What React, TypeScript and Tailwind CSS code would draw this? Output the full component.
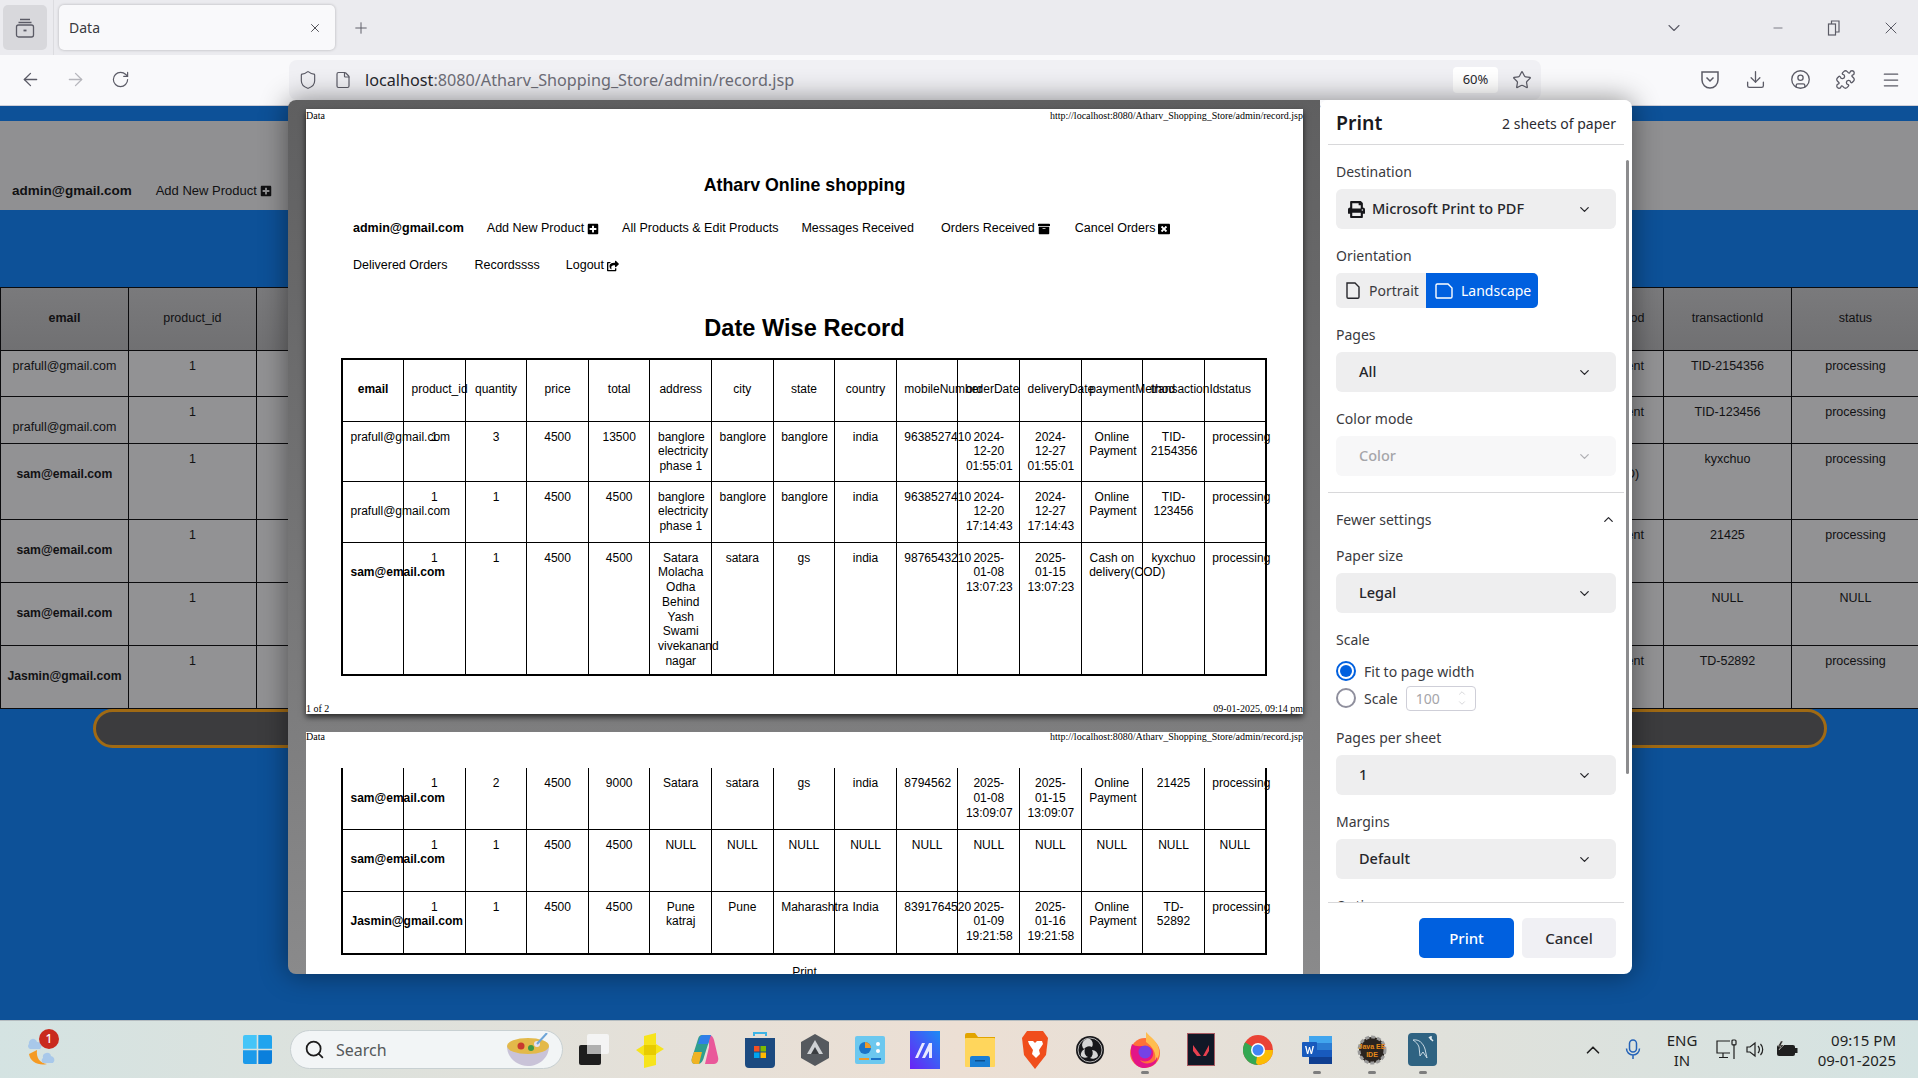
import { ReactNode } from "react";
import { ArrowLeft, ArrowRight, ChevronDown, ChevronUp, CircleUser, Download, File, Menu, Minus, Plus, Puzzle, RotateCw, Search, Shield, Star, X } from "lucide-react";
import { FaArchive, FaPlusSquare, FaPrint, FaShareSquare, FaWindowClose } from "react-icons/fa";

const columns = ["email", "product_id", "quantity", "price", "total", "address", "city", "state", "country", "mobileNumber", "orderDate", "deliveryDate", "paymentMethod", "transactionId", "status"];

type Row = { cells: string[]; bold?: boolean; drop?: boolean };

const rows: Row[] = [
  { cells: ["prafull@gmail.com", "1", "3", "4500", "13500", "banglore electricity phase 1", "banglore", "banglore", "india", "9638527410", "2024-\n12-20\n01:55:01", "2024-\n12-27\n01:55:01", "Online Payment", "TID-\n2154356", "processing"] },
  { drop: true, cells: ["prafull@gmail.com", "1", "1", "4500", "4500", "banglore electricity phase 1", "banglore", "banglore", "india", "9638527410", "2024-\n12-20\n17:14:43", "2024-\n12-27\n17:14:43", "Online Payment", "TID-\n123456", "processing"] },
  { bold: true, drop: true, cells: ["sam@email.com", "1", "1", "4500", "4500", "Satara Molacha Odha Behind Yash Swami vivekanand nagar", "satara", "gs", "india", "9876543210", "2025-\n01-08\n13:07:23", "2025-\n01-15\n13:07:23", "Cash on\ndelivery(COD)", "kyxchuo", "processing"] },
  { bold: true, drop: true, cells: ["sam@email.com", "1", "2", "4500", "9000", "Satara", "satara", "gs", "india", "8794562", "2025-\n01-08\n13:09:07", "2025-\n01-15\n13:09:07", "Online Payment", "21425", "processing"] },
  { bold: true, drop: true, cells: ["sam@email.com", "1", "1", "4500", "4500", "NULL", "NULL", "NULL", "NULL", "NULL", "NULL", "NULL", "NULL", "NULL", "NULL"] },
  { bold: true, drop: true, cells: ["Jasmin@gmail.com", "1", "1", "4500", "4500", "Pune katraj", "Pune", "Maharashtra", "India", "8391764520", "2025-\n01-09\n19:21:58", "2025-\n01-16\n19:21:58", "Online Payment", "TD-\n52892", "processing"] },
];

const pageRowHeights = ["h-[46px]", "h-[47px]", "h-[76px]", "h-[63px]", "h-[63px]", "h-[63px]"];
const sheetRowHeights = ["h-[60px]", "h-[61px]", "h-[133px]", "h-[61px]", "h-[62px]", "h-[63px]"];

function CellText({ row, i, flat, boldCls }: { row: Row; i: number; flat?: boolean; boldCls?: string }) {
  const value = flat ? row.cells[i].replace(/-\n/g, "-").replace(/\n/g, " ") : row.cells[i];
  if (i > 0) return <>{value}</>;
  return (
    <span className={row.bold ? `font-bold ${boldCls ?? ""}` : ""}>
      {row.drop && <br />}
      {value}
    </span>
  );
}

function PageTable() {
  return (
    <table className="w-[1920px] shrink-0 table-fixed border-collapse text-[12.5px] leading-[15px] text-[#111113]">
      <thead>
        <tr className="h-[63px] bg-gradient-to-b from-[#7a7a7c] to-[#707072]">
          {columns.map((c, i) => (
            <th key={c} className={`border border-[#0b0b0d] pb-px align-middle ${i === 0 ? "font-bold" : "font-normal"}`}>{c}</th>
          ))}
        </tr>
      </thead>
      <tbody>
        {rows.map((row, r) => (
          <tr key={r} className={`${pageRowHeights[r]} bg-[#929294]`}>
            {row.cells.map((_, i) => (
              <td key={i} className="border border-[#0b0b0d] px-1.5 pt-[8px] text-center align-top">
                <CellText row={row} i={i} flat boldCls="text-[12.2px]" />
              </td>
            ))}
          </tr>
        ))}
      </tbody>
    </table>
  );
}

function SheetTable({ from, to, head }: { from: number; to: number; head?: boolean }) {
  return (
    <table className={`w-[926px] table-fixed border-collapse border-2 border-black text-[12px] leading-[14.75px] text-black ${head ? "" : "border-t-0"}`}>
      {head && (
        <thead>
          <tr className="h-[62px]">
            {columns.map((c, i) => (
              <th key={c} className={`border border-black px-[7.5px] pb-px align-middle ${i === 0 ? "font-bold" : "font-normal"}`}>{c}</th>
            ))}
          </tr>
        </thead>
      )}
      <tbody>
        {rows.slice(from, to).map((row, r) => (
          <tr key={r} className={sheetRowHeights[from + r]}>
            {row.cells.map((_, i) => (
              <td key={i} className={`border border-black px-[7.5px] pt-[8px] text-center align-top whitespace-pre-line ${!head && r === 0 ? "border-t-0" : ""}`}>
                <CellText row={row} i={i} />
              </td>
            ))}
          </tr>
        ))}
      </tbody>
    </table>
  );
}

function SheetHeader() {
  return (
    <div className="flex h-[12px] items-end justify-between font-['Liberation_Serif',serif] text-[10px] leading-[10px] text-black">
      <span>Data</span>
      <span>http://localhost:8080/Atharv_Shopping_Store/admin/record.jsp</span>
    </div>
  );
}

function Select({ children, disabled }: { children: ReactNode; disabled?: boolean }) {
  return (
    <div className={`flex h-10 w-[280px] items-center justify-between rounded-[6px] pl-[23px] pr-[24px] text-[14.5px] font-medium ${disabled ? "bg-[#f7f7f8] text-[#a5a5a9]" : "bg-[#eeeeef] text-[#26262b]"}`}>
      {children}
      <ChevronDown size={15} strokeWidth={2} className={disabled ? "text-[#b0b0b4]" : "text-[#26262b]"} />
    </div>
  );
}

function Label({ children, className = "" }: { children: ReactNode; className?: string }) {
  return <div className={`h-5 text-[14px] leading-5 text-[#3a3a40] ${className}`}>{children}</div>;
}

function PrintPanel() {
  return (
    <div className="flex w-[312px] shrink-0 flex-col rounded-r-[8px] rounded-tl-[8px] bg-white font-['Noto_Sans',sans-serif]">
      <div className="mx-2 flex h-[45px] shrink-0 items-center justify-between border-b border-[#d8d8da] px-2 pt-[2px]">
        <span className="text-[19.5px] font-semibold text-[#1a1a1f]">Print</span>
        <span className="text-[14px] text-[#2a2a30]">2 sheets of paper</span>
      </div>
      <div className="relative h-[757px] overflow-hidden px-4 pt-[17px]">
        <div className="absolute right-[3px] top-[15px] h-[614px] w-[3px] rounded-full bg-[#8c8c8e]" />
        <Label>Destination</Label>
        <div className="mt-[7px]">
          <div className="flex h-10 w-[280px] items-center justify-between rounded-[6px] bg-[#eeeeef] pl-3 pr-[24px] text-[14.5px] font-medium text-[#26262b]">
            <span className="flex items-center gap-[7px]"><FaPrint size={17} className="text-[#17171b]" />Microsoft Print to PDF</span>
            <ChevronDown size={15} strokeWidth={2} />
          </div>
        </div>
        <Label className="mt-[17px]">Orientation</Label>
        <div className="mt-[7px] flex h-[35px] w-[202px] text-[14px]">
          <div className="flex w-[90px] items-center gap-[8px] rounded-l-[5px] bg-[#eeeeef] pl-[9px] text-[#3a3a40]">
            <svg width="16" height="17" viewBox="0 0 16 17" fill="none" stroke="#26262b" strokeWidth="1.4"><path d="M2 1h8l4 4v10a1.200 1.200 0 0 1-1.200 1.200H3.200A1.200 1.200 0 0 1 2 15Z" /></svg>
            Portrait
          </div>
          <div className="flex w-[112px] items-center gap-[8px] rounded-r-[5px] bg-[#0060df] pl-[9px] text-white">
            <svg width="18" height="16" viewBox="0 0 18 16" fill="none" stroke="#fff" strokeWidth="1.4"><path d="M1 2.200A1.200 1.200 0 0 1 2.200 1H13l4 4v8.800a1.200 1.200 0 0 1-1.200 1.200H2.200A1.200 1.200 0 0 1 1 13.800Z" /></svg>
            Landscape
          </div>
        </div>
        <Label className="mt-[17px]">Pages</Label>
        <div className="mt-[7px]"><Select>All</Select></div>
        <Label className="mt-[17px]">Color mode</Label>
        <div className="mt-[7px]"><Select disabled>Color</Select></div>
        <div className="-mx-2 mt-[16px] border-t border-[#d8d8da]" />
        <div className="mt-[16px] flex h-5 items-center justify-between pr-0 text-[14px] text-[#3a3a40]">
          Fewer settings
          <ChevronUp size={15} strokeWidth={2} className="text-[#26262b]" />
        </div>
        <Label className="mt-[17px]">Paper size</Label>
        <div className="mt-[7px]"><Select>Legal</Select></div>
        <Label className="mt-[17px]">Scale</Label>
        <div className="mt-[11px] flex h-[20px] items-center gap-[8px] text-[14px] text-[#3a3a40]">
          <span className="flex size-5 items-center justify-center rounded-full border-2 border-[#0060df]"><span className="size-[12px] rounded-full bg-[#0060df]" /></span>
          Fit to page width
        </div>
        <div className="mt-[4px] flex h-[26px] items-center gap-[8px] text-[14px] text-[#3a3a40]">
          <span className="size-5 rounded-full border-2 border-[#8f8f9d]" />
          Scale
          <span className="flex h-[25px] w-[70px] items-center justify-between rounded-[4px] border border-[#cfcfd8] pl-[9px] pr-[8px] text-[#a5a5a9]">
            100
            <span className="flex flex-col text-[#cfcfd3]"><ChevronUp size={10} /><ChevronDown size={10} /></span>
          </span>
        </div>
        <Label className="mt-[17px]">Pages per sheet</Label>
        <div className="mt-[7px]"><Select>1</Select></div>
        <Label className="mt-[17px]">Margins</Label>
        <div className="mt-[7px]"><Select>Default</Select></div>
        <Label className="mt-[17px]">Options</Label>
      </div>
      <div className="mx-2 flex flex-1 items-start justify-end gap-2 border-t border-[#d8d8da] pr-2 pt-[15px] text-[15px] font-medium">
        <div className="flex h-10 w-[95px] items-center justify-center rounded-[5px] bg-[#0060df] text-white">Print</div>
        <div className="flex h-10 w-[94px] items-center justify-center rounded-[5px] bg-[#f0f0f4] text-[#2a2a30]">Cancel</div>
      </div>
    </div>
  );
}

function PrintPreview() {
  const link = "inline-flex items-center gap-[3px]";
  return (
    <div className="flex w-[1032px] shrink-0 flex-col items-start gap-[18px] overflow-hidden rounded-l-[8px] bg-gradient-to-b from-[#5f5f60] to-[#8a8a8b] pl-[18px] pt-[9px] font-['Liberation_Sans',sans-serif]">
      <div className="flex h-[605px] w-[997px] shrink-0 flex-col bg-white shadow-[0_3px_6px_rgba(0,0,0,0.7)]">
        <SheetHeader />
        <div className="mt-[54px] text-center text-[17.8px] font-bold leading-[20px] text-black">Atharv Online shopping</div>
        <div className="ml-[47px] mt-[26px] flex w-[880px] flex-wrap gap-x-[23px] gap-y-[22px] text-[12.5px] leading-[15px] text-black">
          <span className="font-bold">admin@gmail.com</span>
          <span className={link}>Add New Product<FaPlusSquare size={12} /></span>
          <span>All Products &amp; Edit Products</span>
          <span>Messages Received</span>
          <span className={`${link} ml-[4px]`}>Orders Received<FaArchive size={12} /></span>
          <span className={`${link} ml-[2px]`}>Cancel Orders<FaWindowClose size={12} /></span>
          <span>Delivered Orders</span>
          <span className="ml-[4px]">Recordssss</span>
          <span className={`${link} ml-[3px]`}>Logout<FaShareSquare size={12} /></span>
        </div>
        <div className="mt-[41px] text-center text-[23.6px] font-bold leading-[28px] text-black">Date Wise Record</div>
        <div className="ml-[35px] mt-[16px]"><SheetTable from={0} to={3} head /></div>
        <div className="mt-auto flex h-[11px] items-center justify-between font-['Liberation_Serif',serif] text-[10px] text-black">
          <span>1 of 2</span>
          <span>09-01-2025, 09:14 pm</span>
        </div>
      </div>
      <div className="flex h-[242px] w-[997px] shrink-0 flex-col overflow-hidden bg-white">
        <SheetHeader />
        <div className="ml-[35px] mt-[26px]"><SheetTable from={3} to={6} /></div>
        <div className="mt-[10px] text-center text-[12px] leading-[14px] text-black">Print</div>
      </div>
    </div>
  );
}

function TabBar() {
  return (
    <div className="flex h-[55px] shrink-0 items-center bg-[#ebebef] pl-[3px] text-[#5b5b66]">
      <div className="flex h-[45px] w-[44px] items-center justify-center rounded-[5px] bg-[#d8d8dc]">
        <svg width="20" height="20" viewBox="0 0 20 20" fill="none" stroke="#5b5b66" strokeWidth="1.300"><path d="M5 1.500h10M3.500 4.500h13" /><rect x="1.500" y="7" width="17" height="12" rx="2" /><path d="M8.500 12.500h3" strokeWidth="1.800" /></svg>
      </div>
      <div className="ml-[6px] h-[55px] w-px bg-[#dcdce0]" />
      <div className="ml-[5px] flex h-[45px] w-[276px] items-center justify-between rounded-[5px] bg-[#f9f9fb] pl-[10px] pr-[13px] font-['Noto_Sans',sans-serif] text-[14px] text-[#3a3a40] shadow-[0_0_3px_rgba(0,0,0,0.25)]">
        Data
        <X size={14} strokeWidth={1.5} />
      </div>
      <Plus size={18} strokeWidth={1.3} className="ml-[17px]" />
      <ChevronDown size={20} strokeWidth={1.3} className="ml-[1294px]" />
      <Minus size={14} strokeWidth={1.3} className="ml-[87px]" />
      <svg width="14" height="16" viewBox="0 0 14 16" fill="none" stroke="#5b5b66" strokeWidth="1.200" className="ml-[42px]"><rect x="1.500" y="4" width="7" height="11" /><path d="M4.500 4V1h7.500v11H8.500" /></svg>
      <X size={20} strokeWidth={1.2} className="ml-[40px]" />
    </div>
  );
}

function Toolbar() {
  return (
    <div className="flex h-[51px] shrink-0 items-center border-b border-[#cfcfd8] bg-[#f9f9fb] pb-[1px] text-[#5b5b66]">
      <ArrowLeft size={21} strokeWidth={1.5} className="ml-[20px]" />
      <ArrowRight size={21} strokeWidth={1.5} className="ml-[24px] text-[#b6b6bc]" />
      <RotateCw size={19} strokeWidth={1.5} className="ml-[25px]" />
      <div className="ml-[159px] mt-[5px] flex h-10 w-[1252px] items-center self-start rounded-[8px] bg-[#f0f0f4] pl-[9px] pr-[9px]">
        <Shield size={20} strokeWidth={1.4} />
        <File size={18} strokeWidth={1.6} className="ml-[16px]" />
        <span className="ml-[13px] font-['Noto_Sans',sans-serif] text-[16.2px] text-[#6e6e78]"><span className="text-[#27272c]">localhost</span>:8080/Atharv_Shopping_Store/admin/record.jsp</span>
        <span className="ml-auto flex h-[26px] w-[45px] items-center justify-center rounded-[4px] bg-white font-['Noto_Sans',sans-serif] text-[13px] text-[#27272c]">60%</span>
        <Star size={20} strokeWidth={1.5} className="ml-[14px]" />
      </div>
      <svg width="22" height="22" viewBox="0 0 22 22" fill="none" stroke="#5b5b66" strokeWidth="1.500" className="ml-[158px]"><path d="M3 3h16v8a8 8 0 0 1-16 0Z" /><path d="M7.500 8.500 11 12l3.500-3.500" /></svg>
      <Download size={21} strokeWidth={1.5} className="ml-[24px]" />
      <CircleUser size={21} strokeWidth={1.5} className="ml-[24px]" />
      <Puzzle size={21} strokeWidth={1.5} className="ml-[24px]" />
      <Menu size={20} strokeWidth={1.5} className="ml-[25px]" />
    </div>
  );
}

function Windows() {
  return (
    <svg width="29" height="29" viewBox="0 0 29 29">
      <path d="M0 2a2 2 0 0 1 2-2h11.700v13.700H0Z" fill="#45c5f8" />
      <path d="M15.300 0H27a2 2 0 0 1 2 2v11.700H15.300Z" fill="#20a4ee" />
      <path d="M0 15.300h13.700V29H2a2 2 0 0 1-2-2Z" fill="#1c9aea" />
      <path d="M15.300 15.300H29V27a2 2 0 0 1-2 2H15.300Z" fill="#0a7fdc" />
    </svg>
  );
}

const taskIcons: { name: string; cls?: string; dot?: boolean; icon: ReactNode }[] = [
  { name: "Task view", icon: <svg width="31" height="31" viewBox="0 0 31 31"><rect x="0" y="11" width="22" height="20" rx="2" fill="#1e1e1e" /><rect x="8" y="0" width="22" height="20" rx="2" fill="#f4f4f4" /><rect x="8" y="11" width="14" height="9" fill="#b0b0b0" /></svg> },
  { name: "Sticky", icon: <svg width="28" height="36" viewBox="0 0 28 36"><path d="M8 4 20 1v11l8 5-8 5v11l-12 3V24L0 18l8-5Z" fill="#f7e41c" /><path d="M8 13h12v10H8Z" fill="#e8cc00" /></svg> },
  { name: "Copilot", icon: <svg width="28" height="32" viewBox="0 0 28 32"><path d="M11 1h9l-7 22c-1 4-3 7-6 7H4C1 30 0 27 1 24L7 5c1-3 2-4 4-4Z" fill="#2f9e8f" /><path d="M18 1c3 0 4 2 5 5l4 17c1 4-1 7-4 7h-9l4-17Z" fill="#e9589a" /><path d="M9 3c1-2 3-2 5-2h6l-3 9H7Z" fill="#2f7fe8" /><path d="M3 18h8l-3 12H4c-3 0-4-3-3-6Z" fill="#f0b323" /></svg> },
  { name: "Store", icon: <svg width="30" height="38" viewBox="0 0 30 38"><path d="M9 5V2h12v3" fill="none" stroke="#3db4e6" strokeWidth="2" /><path d="M0 7h30v26a4 4 0 0 1-4 4H4a4 4 0 0 1-4-4Z" fill="#1b4a80" /><rect x="9" y="15" width="5.500" height="5.500" fill="#f25022" /><rect x="15.500" y="15" width="5.500" height="5.500" fill="#7fba00" /><rect x="9" y="21.500" width="5.500" height="5.500" fill="#00a4ef" /><rect x="15.500" y="21.500" width="5.500" height="5.500" fill="#ffb900" /></svg> },
  { name: "Hex", icon: <svg width="28" height="32" viewBox="0 0 28 32"><path d="M14 0 28 8v16l-14 8L0 24V8Z" fill="#55595e" /><path d="M14 6 22 20H6Z" fill="#cfd2d5" /><path d="M14 13l4 7H10Z" fill="#3a3d41" /></svg> },
  { name: "Chart", icon: <svg width="30" height="28" viewBox="0 0 30 28"><rect width="30" height="28" rx="2" fill="#6cc8ef" /><circle cx="10" cy="12" r="6" fill="#1c74c8" /><path d="M10 12V6a6 6 0 0 1 6 6Z" fill="#f09a2c" /><circle cx="23" cy="8" r="2" fill="#fff" /><circle cx="23" cy="15" r="2" fill="#fff" /><rect x="4" y="22" width="10" height="2" fill="#f09a2c" /><rect x="16" y="22" width="10" height="2" fill="#1c74c8" /></svg> },
  { name: "Maker", icon: <svg width="30" height="38" viewBox="0 0 30 38"><defs><linearGradient id="mk" x1="0" y1="1" x2="1" y2="0"><stop offset="0" stopColor="#6a22f5" /><stop offset="1" stopColor="#1c8cf5" /></linearGradient></defs><rect width="30" height="38" fill="url(#mk)" /><path d="M5 27 12 12h3L8 27Zm7 0 7-15h3v15h-3v-7l-4 7Z" fill="#e9e9ff" /></svg> },
  { name: "Files", icon: <svg width="30" height="34" viewBox="0 0 30 34"><path d="M0 2a2 2 0 0 1 2-2h8l3 4h17v6H0Z" fill="#e2a400" /><rect y="5" width="30" height="29" rx="1" fill="#ffd65c" /><path d="M5 34V25a2 2 0 0 1 2-2h16a2 2 0 0 1 2 2v9Z" fill="#1a7fd4" /><rect x="10" y="27" width="10" height="1.500" fill="#0c4f8e" /></svg> },
  { name: "Brave", icon: <svg width="26" height="38" viewBox="0 0 26 38"><path d="M5 0h16l5 7-2 17-11 14L2 24 0 7Z" fill="#f04e1c" /><path d="M6 10h5l2 2 2-2h5l1 3-4 6 1 4-4 4-4-4 1-4-4-6Z" fill="#fff" /></svg> },
  { name: "OBS", icon: <svg width="28" height="28" viewBox="0 0 28 28"><circle cx="14" cy="14" r="14" fill="#18181b" /><circle cx="14" cy="14" r="12" fill="none" stroke="#d5d5d5" strokeWidth="0.800" /><path d="M14 3a6 6 0 0 1 2 8 6 6 0 0 0-8 2 6 6 0 0 1 6-10Zm8 17a6 6 0 0 1-8 2 6 6 0 0 0 2-8 6 6 0 0 1 6 6ZM5 20a6 6 0 0 1 4-7 6 6 0 0 0 3 8 6 6 0 0 1-7-1Z" fill="#d5d5d5" /></svg> },
  { name: "Firefox", dot: true, icon: <svg width="30" height="36" viewBox="0 0 30 36"><circle cx="15" cy="21" r="15" fill="#ff7139" /><path d="M16 0c4 5 12 9 13 18 1 6-2 9-4 11 2-8-3-15-9-19Z" fill="#ffbd4f" /><path d="M2 12c3 3 8 2 13 2 6 0 9 4 8 9-1 6-8 8-13 5 3 5 14 5 17-3 1 9-9 11-14 11C5 36-2 24 2 12Z" fill="#e31587" /><circle cx="15" cy="20" r="6.500" fill="#7542e5" /></svg> },
  { name: "Valorant", cls: "ml-px", icon: <svg width="28" height="33" viewBox="0 0 28 33"><rect width="28" height="33" fill="#111827" stroke="#a85a62" strokeWidth="2" /><path d="M6 12l8 11h-4L6 18Zm16 0v6l-3 5h-3Z" fill="#e8404f" /></svg> },
  { name: "Chrome", cls: "ml-[2px]", icon: <svg width="30" height="30" viewBox="0 0 30 30"><circle cx="15" cy="15" r="15" fill="#ea4335" /><path d="M15 15 2 22.500A15 15 0 0 1 2 7.500Z" fill="#34a853" /><path d="M15 15 2 7.500V22.500A15 15 0 0 0 15 30Z" fill="#34a853" /><path d="M15 15h15a15 15 0 0 1-15 15l-2-2Z" fill="#fbbc04" /><circle cx="15" cy="15" r="7" fill="#fff" /><circle cx="15" cy="15" r="5.500" fill="#4285f4" /></svg> },
  { name: "Word", cls: "ml-[4px]", dot: true, icon: <svg width="30" height="28" viewBox="0 0 30 28"><rect x="7" width="23" height="7" fill="#41a5ee" /><rect x="7" y="7" width="23" height="7" fill="#2b7cd3" /><rect x="7" y="14" width="23" height="7" fill="#185abd" /><rect x="7" y="21" width="23" height="7" fill="#103f91" /><rect y="6" width="15" height="15" rx="1" fill="#185abd" /><path d="M3 10h1.500l1.200 6 1.300-5h1l1.300 5 1.200-6H12l-2 8H8.700L7.500 13l-1.200 5H5Z" fill="#fff" /></svg> },
  { name: "Java EE", dot: true, icon: <svg width="30" height="30" viewBox="0 0 30 30"><circle cx="15" cy="15" r="13" fill="#2a2420" stroke="#9a9a9a" strokeWidth="3" strokeDasharray="4 2" /><text x="15" y="14" textAnchor="middle" fontSize="7" fontFamily="Liberation Sans" fontWeight="700" fill="#e88a1a">Java EE</text><text x="15" y="22" textAnchor="middle" fontSize="7" fontFamily="Liberation Sans" fontWeight="700" fill="#e88a1a">IDE</text></svg> },
  { name: "MySQL", cls: "-ml-[4px]", dot: true, icon: <svg width="29" height="33" viewBox="0 0 29 33"><rect width="29" height="33" rx="4" fill="#2f6382" /><path d="M5 7c6-1 10 3 12 9l2 9-4-6-3 4-1-9C10 11 8 9 5 7Z" fill="none" stroke="#c8d8e2" strokeWidth="1" /><path d="M21 4l4 4M23 3v4" stroke="#e4edf2" strokeWidth="1.500" /></svg> },
];

function Taskbar() {
  return (
    <div className="flex h-[58px] shrink-0 items-center border-t border-[#b4bcc0] bg-gradient-to-r from-[#d4e3e2] via-[#ecdfd4] to-[#d4e3e2] font-['Noto_Sans',sans-serif]">
      <div className="relative ml-[26px] h-[36px] w-[32px] shrink-0">
        <svg width="32" height="34" viewBox="0 0 32 34" className="absolute left-0 top-[2px]">
          <path d="M3 10a4 4 0 0 1 8-2 4 4 0 0 1 3 7H4a3 3 0 0 1-1-5Z" fill="#a8c8ea" />
          <path d="M3 20c1 8 10 12 18 10-7-1-11-6-10-14Z" fill="#f59a23" />
          <path d="M17 24a4 4 0 0 1 8-2 4 4 0 0 1 2 7H17a3 3 0 0 1 0-5Z" fill="#a8c8ea" />
        </svg>
        <span className="absolute left-[13px] -top-[3px] flex size-5 items-center justify-center rounded-full bg-[#c92a1e] text-[12px] font-medium text-white">1</span>
      </div>
      <div className="ml-[185px] shrink-0"><Windows /></div>
      <div className="ml-[18px] flex h-[39px] w-[273px] shrink-0 items-center rounded-full border border-[#c8d0d2] bg-[#f2f5f6] pl-[13px] pr-[12px] text-[16px] text-[#55585a]">
        <Search size={21} strokeWidth={2} className="text-[#1c1c1c]" />
        <span className="ml-[11px]">Search</span>
        <svg width="44" height="34" viewBox="0 0 44 34" className="ml-auto">
          <path d="M1 13c0 12 10 20 21 20s21-8 21-20Z" fill="#c9c3d8" />
          <ellipse cx="22" cy="13" rx="21" ry="8" fill="#e3b94a" />
          <circle cx="15" cy="13" r="3.500" fill="#c93a2e" />
          <circle cx="25" cy="15" r="3" fill="#3f9a45" />
          <circle cx="31" cy="11" r="3" fill="#e6e1ef" />
          <path d="M31 11 41 0" stroke="#6da5d8" strokeWidth="2" />
        </svg>
      </div>
      <div className="ml-[4px] flex shrink-0">
        {taskIcons.map((t) => (
          <div key={t.name} className={`relative flex h-[44px] w-[55px] items-center justify-center ${t.cls ?? ""}`}>
            {t.icon}
            {t.dot && <span className="absolute -bottom-[2px] left-[24px] h-[3px] w-[8px] rounded-full bg-[#7d7d7d]" />}
          </div>
        ))}
      </div>
      <div className="ml-auto flex items-center pr-[22px] text-[15px] text-[#1f1f1f]">
        <ChevronUp size={22} strokeWidth={1.8} />
        <svg width="16" height="21" viewBox="0 0 16 21" fill="none" stroke="#2563b8" strokeWidth="1.500" className="ml-[21px]"><rect x="4.500" y="1" width="7" height="12" rx="3.500" /><path d="M1.500 9.500a6.500 6.500 0 0 0 13 0M8 16v4" /></svg>
        <div className="ml-[23px] flex w-[36px] flex-col items-center leading-[20px]"><span>ENG</span><span>IN</span></div>
        <svg width="22" height="21" viewBox="0 0 22 21" fill="none" stroke="#1f1f1f" strokeWidth="1.200" className="ml-[16px]"><path d="M14 14H1V2h13" /><path d="M7 14v4M3 18.500h9M18 5v15" /><rect x="16" y="1" width="4" height="5" rx="1" /></svg>
        <svg width="20" height="17" viewBox="0 0 20 17" fill="none" stroke="#1f1f1f" strokeWidth="1.200" className="ml-[8px]"><path d="M1 6h3l5-4v13l-5-4H1ZM12 5a5 5 0 0 1 0 7M14.500 3a8 8 0 0 1 0 11" /></svg>
        <svg width="22" height="17" viewBox="0 0 22 17" className="ml-[10px]"><rect x="1" y="4" width="18" height="11" rx="2" fill="#1f1f1f" /><rect x="19" y="7" width="2.500" height="5" fill="#1f1f1f" /><path d="M5 0 2 5h3L3 9l5-5H5l2-4Z" fill="#1f1f1f" stroke="#e4e0da" strokeWidth="0.500" /></svg>
        <div className="ml-[20px] flex w-[78px] flex-col items-end whitespace-nowrap leading-[20px]"><span>09:15 PM</span><span>09-01-2025</span></div>
      </div>
    </div>
  );
}

export default function App() {
  return (
    <div className="relative flex h-screen w-full flex-col overflow-hidden">
      <TabBar />
      <Toolbar />
      <main className="flex min-h-0 flex-1 flex-col overflow-hidden bg-[#0d5198] font-['Liberation_Sans',sans-serif]">
        <div className="mt-[15px] flex h-[89px] shrink-0 items-center gap-[24px] bg-[#909092] pl-3 pt-[51px] text-[13px] text-[#111113]">
          <span className="font-bold text-[13.5px]">admin@gmail.com</span>
          <span className="inline-flex items-center gap-[3px]">Add New Product<FaPlusSquare size={12} /></span>
        </div>
        <div className="mt-[77px] shrink-0"><PageTable /></div>
        <div className="ml-[93px] mr-[91px] flex h-[39px] shrink-0 items-center justify-center rounded-full border-[3px] border-[#a06a14] bg-[#3c3c3e] text-[14px] text-white">Print</div>
      </main>
      <Taskbar />
      <div className="absolute left-[288px] top-[100px] flex h-[874px] w-[1344px] rounded-[8px] shadow-[0_0_28px_rgba(0,0,0,0.45)]">
        <PrintPreview />
        <PrintPanel />
      </div>
    </div>
  );
}
